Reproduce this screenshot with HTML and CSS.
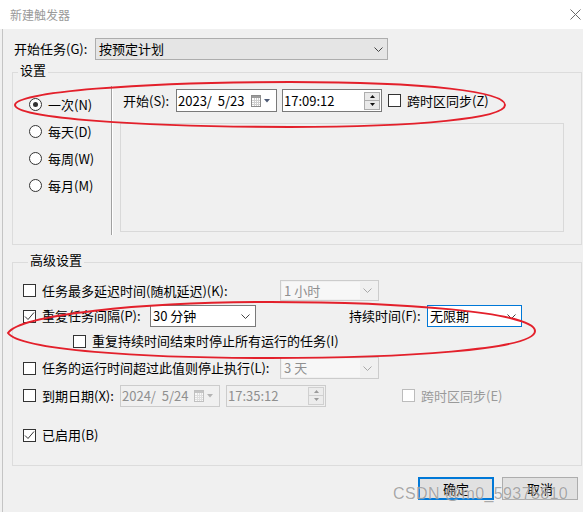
FILE: index.html
```
<!DOCTYPE html>
<html lang="zh-CN">
<head>
<meta charset="utf-8">
<title>新建触发器</title>
<link rel="stylesheet" href="styles.css">
</head>
<body>
<div class="titlebar">
  <span class="title">新建触发器</span>
  <svg class="close" width="11" height="11" viewBox="0 0 11 11"><path d="M0.5 0.5L10.5 10.5M10.5 0.5L0.5 10.5" stroke="#6b6b6b" stroke-width="1"/></svg>
</div>
<div class="body">
  <div class="start-task">
    <span class="lbl-task">开始任务(G):</span>
    <div class="combo combo-top"><span>按预定计划</span>
      <svg width="9" height="5" viewBox="0 0 9 5"><path d="M0.5 0.5L4.5 4.5L8.5 0.5" fill="none" stroke="#444"/></svg>
    </div>
  </div>

  <fieldset class="group g1">
    <legend>设置</legend>
    <div class="g1-inner">
      <div class="radios">
        <div class="radio-row"><span class="radio on"></span><span>一次(N)</span></div>
        <div class="radio-row"><span class="radio"></span><span>每天(D)</span></div>
        <div class="radio-row"><span class="radio"></span><span>每周(W)</span></div>
        <div class="radio-row"><span class="radio"></span><span>每月(M)</span></div>
      </div>
      <div class="vsep"></div>
      <div class="g1-right">
        <div class="start-row">
          <span class="lbl-start">开始(S):</span>
          <div class="datebox"><span class="pre">2023/  5/23</span>
            <svg width="20" height="12" viewBox="0 0 20 12"><rect x="0.5" y="0.5" width="9" height="11" fill="#fff" stroke="#8c8c8c"/><rect x="1" y="1" width="8" height="2" fill="#9c9c9c"/><path d="M1 5.5h8M1 7.5h8M1 9.5h8M3.5 3v8M5.5 3v8M7.5 3v8" stroke="#cfcfcf"/><path d="M13 4h6l-3 3.5z" fill="#4d5a75"/></svg>
          </div>
          <div class="timebox"><span>17:09:12</span>
            <div class="spin">
              <span class="sp"><svg width="5" height="3" viewBox="0 0 5 3"><path d="M0 3h5L2.5 0z" fill="#111"/></svg></span>
              <span class="sp"><svg width="5" height="3" viewBox="0 0 5 3"><path d="M0 0h5L2.5 3z" fill="#111"/></svg></span>
            </div>
          </div>
          <span class="cb cb-z"></span><span>跨时区同步(Z)</span>
        </div>
        <div class="panel"></div>
      </div>
    </div>
  </fieldset>

  <fieldset class="group g2">
    <legend>高级设置</legend>
    <div class="row row-delay">
      <span class="cb"></span><span class="lbl-long">任务最多延迟时间(随机延迟)(K):</span>
      <div class="combo combo-dis combo-short"><span class="dis-field">1 小时</span>
        <svg width="9" height="5" viewBox="0 0 9 5"><path d="M0.5 0.5L4.5 4.5L8.5 0.5" fill="none" stroke="#a8a8a8"/></svg>
      </div>
    </div>
    <div class="row row-repeat">
      <span class="cb"><svg width="11" height="11" viewBox="0 0 11 11"><path d="M1 5.5L4 8.5L10 1.5" fill="none" stroke="#333"/></svg></span>
      <span class="lbl-repeat">重复任务间隔(P):</span>
      <div class="combo combo-interval"><span>30 分钟</span>
        <svg width="9" height="5" viewBox="0 0 9 5"><path d="M0.5 0.5L4.5 4.5L8.5 0.5" fill="none" stroke="#444"/></svg>
      </div>
      <span class="lbl-duration">持续时间(F):</span>
      <div class="combo combo-focus"><span>无限期</span>
        <svg width="9" height="5" viewBox="0 0 9 5"><path d="M0.5 0.5L4.5 4.5L8.5 0.5" fill="none" stroke="#444"/></svg>
      </div>
    </div>
    <div class="row row-stop">
      <span class="cb"></span><span>重复持续时间结束时停止所有运行的任务(I)</span>
    </div>
    <div class="row row-timeout">
      <span class="cb"></span><span class="lbl-long">任务的运行时间超过此值则停止执行(L):</span>
      <div class="combo combo-dis combo-short tall"><span class="dis-field">3 天</span>
        <svg width="9" height="5" viewBox="0 0 9 5"><path d="M0.5 0.5L4.5 4.5L8.5 0.5" fill="none" stroke="#a8a8a8"/></svg>
      </div>
    </div>
    <div class="row row-expire">
      <span class="cb"></span><span class="lbl-expire">到期日期(X):</span>
      <div class="datebox dis"><span class="pre">2024/  5/24</span>
        <svg width="20" height="12" viewBox="0 0 20 12"><rect x="0.5" y="0.5" width="9" height="11" fill="#f8f8f8" stroke="#c0c0c0"/><rect x="1" y="1" width="8" height="2" fill="#c4c4c4"/><path d="M1 5.5h8M1 7.5h8M1 9.5h8M3.5 3v8M5.5 3v8M7.5 3v8" stroke="#dedede"/><path d="M13 4h6l-3 3.5z" fill="#b4b4b4"/></svg>
      </div>
      <div class="timebox dis"><span>17:35:12</span>
        <div class="spin">
          <span class="sp"><svg width="5" height="3" viewBox="0 0 5 3"><path d="M0 3h5L2.5 0z" fill="#9a9a9a"/></svg></span>
          <span class="sp"><svg width="5" height="3" viewBox="0 0 5 3"><path d="M0 0h5L2.5 3z" fill="#9a9a9a"/></svg></span>
        </div>
      </div>
      <span class="cb dis cb-e"></span><span class="dis-text">跨时区同步(E)</span>
    </div>
    <div class="row row-enabled">
      <span class="cb"><svg width="11" height="11" viewBox="0 0 11 11"><path d="M1 5.5L4 8.5L10 1.5" fill="none" stroke="#333"/></svg></span>
      <span>已启用(B)</span>
    </div>
  </fieldset>

  <div class="buttons">
    <div class="btn btn-primary">确定</div>
    <div class="btn">取消</div>
  </div>
</div>

<div class="watermark">CSDN @m0_59375810</div>

<svg class="marks" width="583" height="512" viewBox="0 0 583 512">
  <path d="M15 105C15 92 140 82 290 82C430 82 505 92 505 105C505 118 420 127 290 127C140 127 15 118 15 105Z" fill="none" stroke="#e3202b" stroke-width="2"/>
  <path d="M8 333C20 315 140 302 270 302C400 302 535 312 535 331C535 350 400 358 270 358C140 358 20 350 8 333Z" fill="none" stroke="#e3202b" stroke-width="2"/>
</svg>
</body>
</html>
```
FILE: styles.css
```
* { box-sizing: border-box; }
html, body { margin: 0; padding: 0; }
body {
  width: 583px;
  height: 512px;
  overflow: hidden;
  position: relative;
  background: #f0f0f0;
  font-family: "Noto Sans CJK SC", "Noto Sans", sans-serif;
  font-size: 13px;
  line-height: 16px;
  color: #000;
}
.titlebar {
  height: 29px;
  background: #fff;
  display: flex;
  align-items: center;
  justify-content: space-between;
  padding: 0 2px 0 10px;
}
.title { font-size: 12px; color: #9a9a9a; }
.close { display: block; }

.body {
  margin-left: 2px;
  border-left: 1px solid #c4c4c4;
  height: 483px;
  padding-top: 9px;
}
.start-task {
  display: flex;
  align-items: center;
  height: 22px;
  padding-left: 11px;
}
.lbl-task { width: 81px; }
.combo {
  display: flex;
  align-items: center;
  justify-content: space-between;
  height: 22px;
  padding: 0 5px 0 3px;
  border: 1px solid #7a7a7a;
  background: #fff;
  white-space: nowrap;
}
.combo svg { display: block; flex: none; }
.combo-top { width: 293px; background: #e5e5e5; border-color: #adadad; padding-right: 4px; }

.group {
  margin: 0 0 0 9px;
  width: 570px;
  min-width: 0;
  padding: 0;
  border: 1px solid #dcdcdc;
}
.group legend {
  margin-left: 5px;
  padding: 0 2px 4px 2px;
  line-height: 16px;
}
.g1 { margin-top: 2px; padding: 4px 0 9px 0; }
.g1-inner { display: flex; align-items: flex-start; }
.radios { width: 98px; padding: 5px 0 0 16px; }
.radio-row { display: flex; align-items: center; gap: 6px; height: 27px; }
.radio {
  width: 13px;
  height: 13px;
  border: 1px solid #333;
  border-radius: 50%;
  background: #fff;
  display: flex;
  align-items: center;
  justify-content: center;
  flex: none;
}
.radio.on::after {
  content: "";
  width: 5px;
  height: 5px;
  border-radius: 50%;
  background: #333;
}
.vsep {
  width: 2px;
  height: 149px;
  border-left: 1px solid #a0a0a0;
  border-right: 1px solid #fff;
}
.g1-right { padding: 3px 0 0 7px; }
.start-row { display: flex; align-items: center; height: 23px; }
.lbl-start { width: 53px; margin-left: 3px; }
.pre { white-space: pre; }
.datebox {
  width: 101px;
  height: 23px;
  border: 1px solid #7a7a7a;
  background: #fff;
  display: flex;
  align-items: center;
  justify-content: space-between;
  padding: 0 5px 0 1px;
}
.datebox svg { display: block; }
.timebox {
  width: 100px;
  height: 23px;
  margin-left: 5px;
  border: 1px solid #7a7a7a;
  background: #fff;
  display: flex;
  align-items: center;
  justify-content: space-between;
  padding: 0 1px 0 1px;
}
.spin { display: flex; flex-direction: column; width: 16px; }
.sp {
  height: 9px;
  border: 1px solid #adadad;
  background: #e9e9e9;
  display: flex;
  align-items: center;
  justify-content: center;
}
.sp + .sp { border-top: none; }
.sp svg { display: block; }
.cb {
  width: 13px;
  height: 13px;
  border: 1px solid #333;
  background: #fff;
  margin-right: 6px;
  flex: none;
  display: flex;
  align-items: center;
  justify-content: center;
}
.cb svg { display: block; }
.cb-z { margin-left: 6px; }
.panel {
  margin-top: 11px;
  width: 444px;
  height: 109px;
  border: 1px solid #d9d9d9;
}

.g2 { margin-top: 7px; padding: 7px 0 16px 10px; }
.row { display: flex; align-items: center; white-space: nowrap; }
.row-delay { height: 23px; }
.row-repeat { height: 28px; }
.row-stop { height: 22px; padding-left: 50px; }
.row-timeout { height: 32px; }
.row-expire { height: 23px; }
.row-enabled { height: 28px; margin-top: 14px; }
.lbl-long { width: 238px; }
.lbl-repeat { width: 108px; }
.lbl-expire { width: 78px; }
.lbl-duration { width: 78px; margin-left: 93px; }
.combo-short { width: 99px; height: 21px; }
.combo-short.tall { height: 22px; }
.combo-dis { border-color: #cccccc; background: #f0f0f0; color: #8f8f8f; padding: 1px 6px 1px 1px; }
.dis-field { align-self: stretch; width: 78px; background: #f7f7f7; padding-left: 2px; display: flex; align-items: center; }
.combo-interval { width: 106px; padding-left: 2px; }
.combo-focus { width: 95px; border-color: #0078d7; padding-left: 2px; }
.datebox.dis, .timebox.dis { height: 22px; width: 100px; border-color: #cccccc; background: #f0f0f0; color: #8f8f8f; }
.timebox.dis { margin-left: 6px; }
.timebox.dis .sp { border-color: #d0d0d0; background: #ececec; }
.cb.dis { border-color: #bcbcbc; }
.cb-e { margin-left: 76px; }
.dis-text { color: #9a9a9a; }

.buttons {
  display: flex;
  justify-content: flex-end;
  gap: 8px;
  padding-right: 5px;
  margin-top: 11px;
}
.btn {
  width: 76px;
  height: 23px;
  border: 1px solid #adadad;
  background: #e1e1e1;
  display: flex;
  align-items: center;
  justify-content: center;
}
.btn-primary { border: 2px solid #0078d7; }

.watermark {
  position: absolute;
  left: 393px;
  top: 486px;
  font-family: "Liberation Sans", sans-serif;
  font-size: 16px;
  line-height: 16px;
  letter-spacing: 0.4px;
  color: rgba(95, 95, 95, 0.55);
  text-shadow: 0 0 1px rgba(255, 255, 255, 0.9);
  white-space: nowrap;
}
.marks {
  position: absolute;
  left: 0;
  top: 0;
  pointer-events: none;
}
```
